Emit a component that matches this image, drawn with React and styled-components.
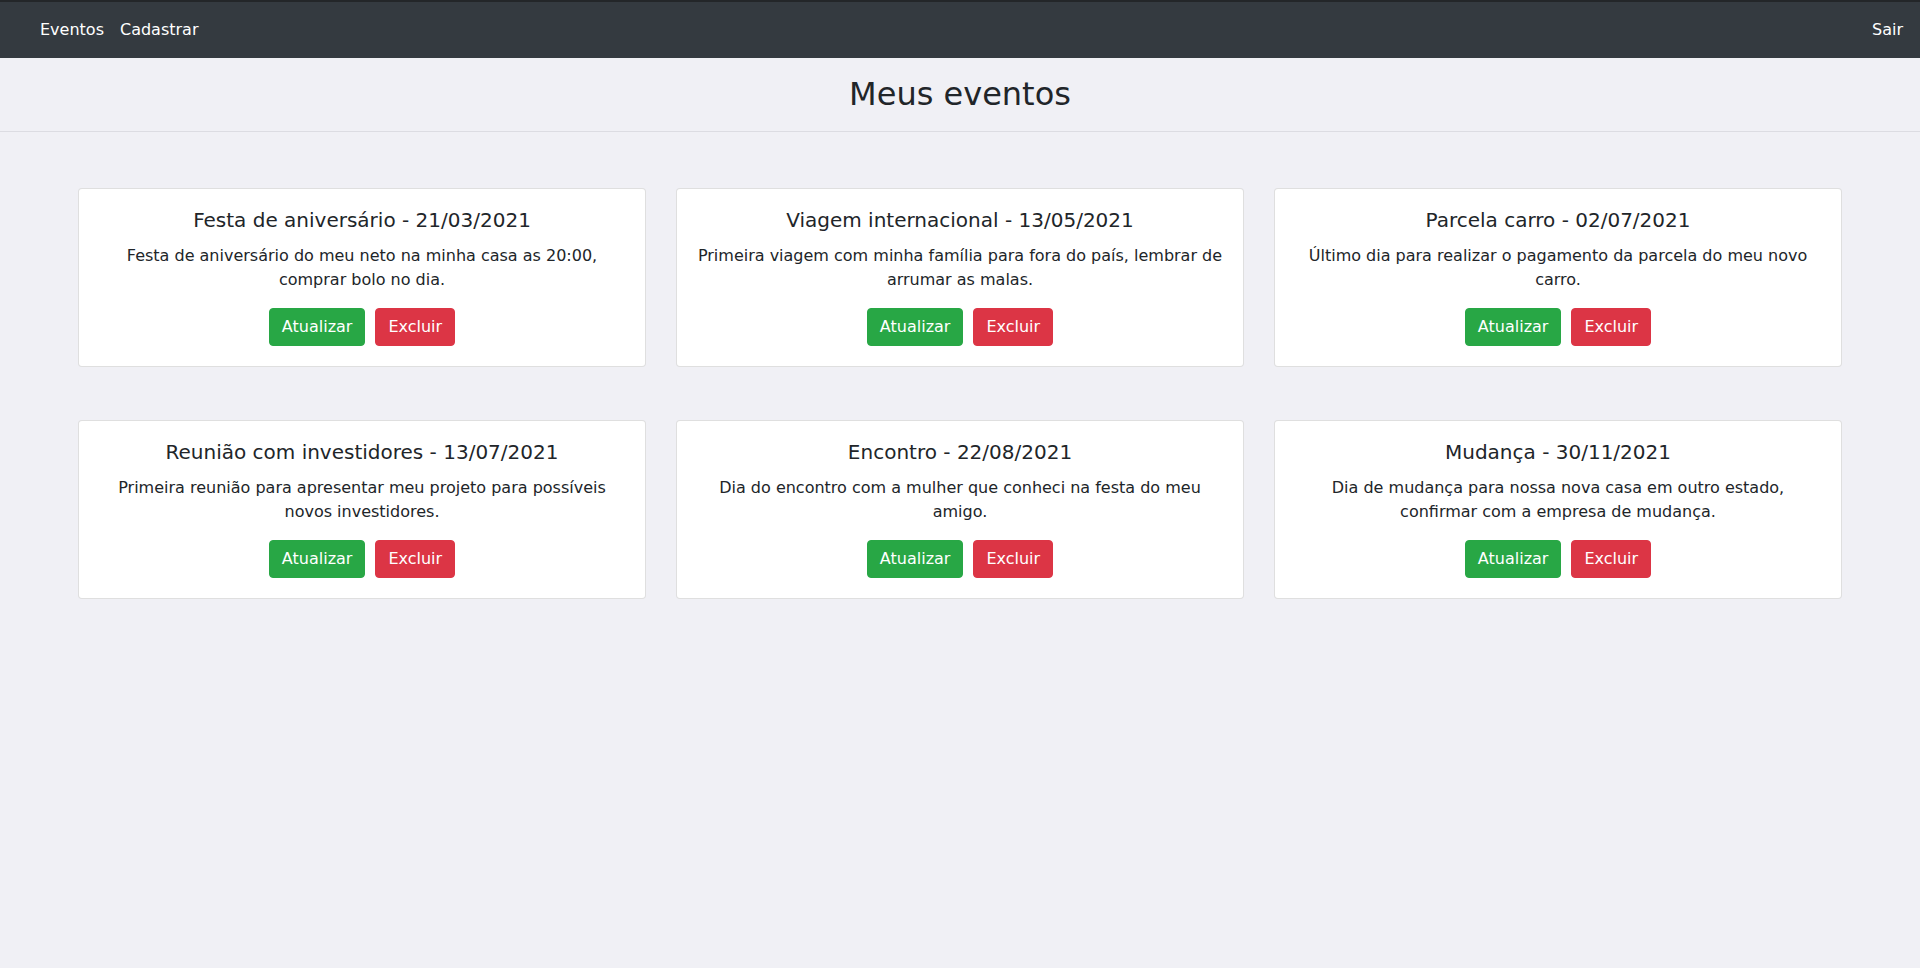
import React from 'react';
import styled, { createGlobalStyle } from 'styled-components';

const GlobalStyle = createGlobalStyle`
  * { box-sizing: border-box; }
  body {
    margin: 0;
    background: #f0f0f5;
    font-family: "DejaVu Sans", "Open Sans", sans-serif;
    color: #212529;
    font-size: 16px;
  }
`;

const Navbar = styled.nav`
  height: 58px;
  background: #343a40;
  border-top: 2px solid #232629;
  display: flex;
  align-items: center;
  justify-content: space-between;
  padding: 0 9px 0 32px;
`;

const NavGroup = styled.div`
  display: flex;
`;

const NavLink = styled.a`
  color: #fff;
  text-decoration: none;
  padding: 8px;
  line-height: 24px;
  font-size: 16px;
`;

const Header = styled.header`
  height: 74px;
  border-bottom: 1px solid #dcdce2;
  display: flex;
  align-items: center;
  justify-content: center;
`;

const PageTitle = styled.h1`
  margin: 0;
  font-size: 32px;
  font-weight: 400;
  line-height: 1.2;
`;

const Grid = styled.main`
  display: grid;
  grid-template-columns: repeat(3, 1fr);
  column-gap: 30px;
  row-gap: 53px;
  padding: 56px 78px;
`;

const Card = styled.div`
  background: #fff;
  border: 1px solid rgba(0, 0, 0, 0.125);
  border-radius: 4px;
  padding: 19px 20px 20px;
  text-align: center;
`;

const CardTitle = styled.h5`
  margin: 0 0 12px;
  font-size: 20px;
  font-weight: 400;
  line-height: 24px;
`;

const CardText = styled.p`
  margin: 0 0 16px;
  line-height: 24px;
`;

const Actions = styled.div`
  display: flex;
  justify-content: center;
  gap: 10px;
`;

const Button = styled.button`
  font-family: inherit;
  font-size: 16px;
  line-height: 24px;
  padding: 6px 12px;
  border: 1px solid ${(p) => p.bg};
  border-radius: 4px;
  background: ${(p) => p.bg};
  color: #fff;
  cursor: pointer;
`;

const events = [
  { title: 'Festa de aniversário', date: '21/03/2021', text: 'Festa de aniversário do meu neto na minha casa as 20:00, comprar bolo no dia.' },
  { title: 'Viagem internacional', date: '13/05/2021', text: 'Primeira viagem com minha família para fora do país, lembrar de arrumar as malas.' },
  { title: 'Parcela carro', date: '02/07/2021', text: 'Último dia para realizar o pagamento da parcela do meu novo carro.' },
  { title: 'Reunião com investidores', date: '13/07/2021', text: 'Primeira reunião para apresentar meu projeto para possíveis novos investidores.' },
  { title: 'Encontro', date: '22/08/2021', text: 'Dia do encontro com a mulher que conheci na festa do meu amigo.' },
  { title: 'Mudança', date: '30/11/2021', text: 'Dia de mudança para nossa nova casa em outro estado, confirmar com a empresa de mudança.' },
];

export default function App() {
  return (
    <>
      <GlobalStyle />
      <Navbar>
        <NavGroup>
          <NavLink href="#">Eventos</NavLink>
          <NavLink href="#">Cadastrar</NavLink>
        </NavGroup>
        <NavLink href="#">Sair</NavLink>
      </Navbar>
      <Header>
        <PageTitle>Meus eventos</PageTitle>
      </Header>
      <Grid>
        {events.map((ev) => (
          <Card key={ev.title}>
            <CardTitle>{ev.title} - {ev.date}</CardTitle>
            <CardText>{ev.text}</CardText>
            <Actions>
              <Button bg="#28a745">Atualizar</Button>
              <Button bg="#dc3545">Excluir</Button>
            </Actions>
          </Card>
        ))}
      </Grid>
    </>
  );
}
